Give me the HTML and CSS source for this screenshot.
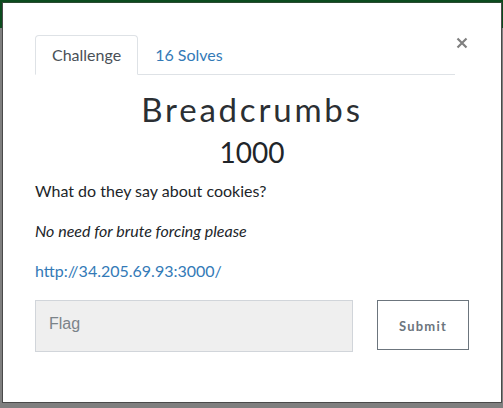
FILE: index.html
```html
<!DOCTYPE html>
<html>
<head>
<meta charset="utf-8">
<link rel="stylesheet" href="styles.css">
</head>
<body>
<div class="navbar"></div>
<div class="modal">
  <div class="modal-head">
    <ul class="tabs">
      <li class="tab active">Challenge</li>
      <li class="tab link">16 Solves</li>
    </ul>
    <button class="close" aria-label="Close">
      <svg width="12" height="12" viewBox="0 0 12 12"><path d="M1.5 1.5 L10.5 10.5 M10.5 1.5 L1.5 10.5" stroke="#808080" stroke-width="2.2" stroke-linecap="butt"/></svg>
    </button>
  </div>
  <h2 class="name">Breadcrumbs</h2>
  <h3 class="value">1000</h3>
  <div class="desc">
    <p>What do they say about cookies?</p>
    <p><em>No need for brute forcing please</em></p>
    <p><a href="#">http://34.205.69.93:3000/</a></p>
  </div>
  <form class="submit-row">
    <input class="flag" type="text" placeholder="Flag">
    <button class="submit" type="button">Submit</button>
  </form>
</div>
</body>
</html>
```
FILE: styles.css
```css
html, body {
  margin: 0;
  padding: 0;
  height: 100%;
}
body {
  background: #7f7f7f;
  font-family: Lato, "Open Sans", sans-serif;
  color: #212529;
  overflow: hidden;
}
.navbar {
  height: 28px;
  background: #0c4b1e;
}
.modal {
  position: absolute;
  left: 2px;
  top: 2px;
  background: #fff;
  border: 1px solid #4a4a4a;
  border-top-color: #2a4a30;
  padding: 32px 32px 50px 32px;
  box-sizing: content-box;
  width: 434px;
}
.modal-head {
  display: flex;
  align-items: flex-start;
}
.tabs {
  flex: 1;
  display: flex;
  list-style: none;
  margin: 0;
  padding: 0;
  border-bottom: 1px solid #dee2e6;
}
.tab {
  font-size: 16px;
  line-height: 22px;
  padding: 8px 16px 8px;
  border: 1px solid transparent;
  border-radius: 4px 4px 0 0;
  margin-bottom: -1px;
  border-bottom: 0;
}
.tab.active {
  color: #495057;
  border-color: #dee2e6;
  border-bottom: 1px solid #fff;
}
.tab.link {
  color: #337ab7;
}
.close {
  width: 14px;
  height: 14px;
  margin-top: 2px;
  padding: 0 0 0 1px;
  border: 0;
  background: none;
  display: flex;
}
.name {
  margin: 15px 0 0;
  text-align: center;
  font-size: 33px;
  line-height: 1.2;
  font-weight: 400;
  letter-spacing: 2.8px;
  color: #2b2f33;
}
.value {
  margin: 6px 0 0;
  text-align: center;
  font-size: 28px;
  line-height: 1.2;
  font-weight: 400;
}
.desc {
  margin-top: 10px;
}
.desc p {
  margin: 0 0 16px;
  font-size: 16px;
  line-height: 24px;
}
.desc a {
  color: #337ab7;
  text-decoration: none;
}
.submit-row {
  display: flex;
  gap: 24px;
  align-items: flex-start;
  margin: 0;
  padding-top: 1px;
}
.flag {
  flex: 1;
  height: 52px;
  box-sizing: border-box;
  background: #efefef;
  border: 1px solid #d1d5da;
  padding: 0 13px 4px;
  font-family: "Liberation Sans", Arial, sans-serif;
  font-size: 16px;
  color: #495057;
  margin: 0;
}
.flag::placeholder {
  color: #7b8389;
}
.submit {
  width: 92px;
  height: 50px;
  box-sizing: border-box;
  background: #fff;
  border: 1px solid #6c757d;
  color: #6c757d;
  font-family: Lato, sans-serif;
  font-weight: 700;
  font-size: 13px;
  letter-spacing: 1.2px;
  padding: 2px 0 0;
  margin: 0;
}
```
